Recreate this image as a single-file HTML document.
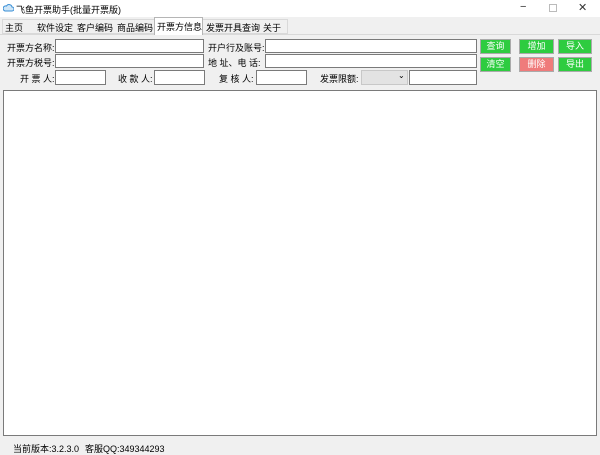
<!DOCTYPE html>
<html><head><meta charset="utf-8"><style>
*{margin:0;padding:0;box-sizing:border-box}
body{width:600px;height:455px;background:#f0f0f0;position:relative;overflow:hidden;font-family:"Liberation Sans","Noto Sans CJK SC",sans-serif;font-size:9px;color:#000}
.a{position:absolute;white-space:nowrap}
.in{position:absolute;background:#fff;border:1px solid #7a7a7a;height:14px}
.btn{position:absolute;background:#2ecc40;color:#fff;border:1px solid #aaa;text-align:center;line-height:12px;height:15px;font-size:9px}
</style></head><body>
<div class="a" style="left:0;top:0;width:600px;height:17px;background:#fff"></div>
<svg class="a" style="left:3px;top:3px" width="11" height="10" viewBox="0 0 11 10"><path d="M2 8h7a2 2 0 0 0 0-4a3 3 0 0 0-5.5-1A2.5 2.5 0 0 0 2 8z" fill="#cfe6f7" stroke="#3a8fd6" stroke-width="1"/></svg>
<div class="a" style="left:16px;top:3px">飞鱼开票助手(批量开票版)</div>
<div class="a" style="left:520px;top:1px;font-size:11px;color:#333">−</div>
<div class="a" style="left:549px;top:4px;width:8px;height:8px;border:1px solid #bbb"></div>
<div class="a" style="left:578px;top:1px;font-size:11px;color:#333">✕</div>
<div class="a" style="left:0;top:34px;width:600px;height:1px;background:#d9d9d9"></div>
<div class="a" style="left:2px;top:19px;width:286px;height:15px;border:1px solid #d9d9d9;background:#f0f0f0"></div>
<div class="a" style="left:5px;top:21px">主页</div>
<div class="a" style="left:37px;top:21px">软件设定</div>
<div class="a" style="left:77px;top:21px">客户编码</div>
<div class="a" style="left:117px;top:21px">商品编码</div>
<div class="a" style="left:154px;top:17px;width:49px;height:18px;background:#fff;border:1px solid #b5b5b5;border-bottom:none"></div>
<div class="a" style="left:157px;top:20px">开票方信息</div>
<div class="a" style="left:206px;top:21px">发票开具查询</div>
<div class="a" style="left:263px;top:21px">关于</div>
<div class="a" style="left:7px;top:41px">开票方名称:</div>
<div class="in" style="left:55px;top:39px;width:149px"></div>
<div class="a" style="left:7px;top:56px">开票方税号:</div>
<div class="in" style="left:55px;top:54px;width:149px"></div>
<div class="a" style="left:208px;top:41px">开户行及账号:</div>
<div class="in" style="left:265px;top:39px;width:212px"></div>
<div class="a" style="left:208px;top:56px">地 址、电 话:</div>
<div class="in" style="left:265px;top:54px;width:212px"></div>
<div class="a" style="left:20px;top:72px">开 票 人:</div>
<div class="in" style="left:55px;top:70px;width:51px;height:15px"></div>
<div class="a" style="left:118px;top:72px">收 款 人:</div>
<div class="in" style="left:154px;top:70px;width:51px;height:15px"></div>
<div class="a" style="left:219px;top:72px">复 核 人:</div>
<div class="in" style="left:256px;top:70px;width:51px;height:15px"></div>
<div class="a" style="left:320px;top:72px">发票限额:</div>
<div class="a" style="left:361px;top:70px;width:47px;height:15px;background:#e3e3e3;border:1px solid #c8c8c8"></div>
<div class="a" style="left:398px;top:71px;font-size:8px">⌄</div>
<div class="in" style="left:409px;top:70px;width:68px;height:15px"></div>
<div class="btn" style="left:480px;top:39px;width:31px">查询</div>
<div class="btn" style="left:480px;top:57px;width:31px">清空</div>
<div class="btn" style="left:519px;top:39px;width:35px">增加</div>
<div class="btn" style="left:519px;top:57px;width:35px;background:#ef7b7b">删除</div>
<div class="btn" style="left:558px;top:39px;width:34px">导入</div>
<div class="btn" style="left:558px;top:57px;width:34px">导出</div>
<div class="a" style="left:3px;top:90px;width:594px;height:346px;background:#fff;border:1px solid #7a7a7a"></div>
<div class="a" style="left:13px;top:442px">当前版本:3.2.3.0</div>
<div class="a" style="left:85px;top:442px">客服QQ:349344293</div>
</body></html>
